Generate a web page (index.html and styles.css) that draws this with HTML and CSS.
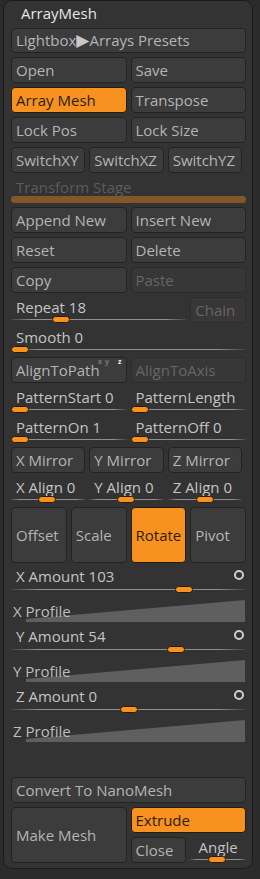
FILE: index.html
```html
<!DOCTYPE html>
<html lang="en">
<head>
  <meta charset="UTF-8">
  <title>ArrayMesh</title>
  <link rel="stylesheet" href="styles.css">
</head>
<body>

  <div class="panel">
    <div class="title">ArrayMesh</div>

    <div class="btn lightbox">Lightbox<span class="arrow">▶</span>Arrays Presets</div>

    <div class="row two">
      <div class="btn">Open</div>
      <div class="btn">Save</div>
    </div>
    <div class="row two">
      <div class="btn on">Array Mesh</div>
      <div class="btn">Transpose</div>
    </div>
    <div class="row two">
      <div class="btn">Lock Pos</div>
      <div class="btn">Lock Size</div>
    </div>
    <div class="row three">
      <div class="btn">SwitchXY</div>
      <div class="btn">SwitchXZ</div>
      <div class="btn">SwitchYZ</div>
    </div>

    <div class="stage">
      <div class="stage-label">Transform Stage</div>
      <div class="stage-bar"></div>
    </div>

    <div class="row two">
      <div class="btn">Append New</div>
      <div class="btn">Insert New</div>
    </div>
    <div class="row two">
      <div class="btn">Reset</div>
      <div class="btn">Delete</div>
    </div>
    <div class="row two">
      <div class="btn">Copy</div>
      <div class="btn off">Paste</div>
    </div>

    <div class="row four">
      <div class="slider span3">
        <div class="slider-label">Repeat 18</div>
        <div class="track"><span class="knob" style="left: 41px"></span></div>
      </div>
      <div class="btn off">Chain</div>
    </div>

    <div class="slider">
      <div class="slider-label">Smooth 0</div>
      <div class="track"><span class="knob" style="left: 0px"></span></div>
    </div>

    <div class="row two">
      <div class="btn">AlignToPath<span class="axes"><b>x</b><b>y</b><b class="z">z</b></span></div>
      <div class="btn off">AlignToAxis</div>
    </div>

    <div class="row two">
      <div class="slider">
        <div class="slider-label">PatternStart 0</div>
        <div class="track"><span class="knob" style="left: 0px"></span></div>
      </div>
      <div class="slider">
        <div class="slider-label">PatternLength</div>
        <div class="track"><span class="knob" style="left: 0px"></span></div>
      </div>
    </div>
    <div class="row two">
      <div class="slider">
        <div class="slider-label">PatternOn 1</div>
        <div class="track"><span class="knob" style="left: 0px"></span></div>
      </div>
      <div class="slider">
        <div class="slider-label">PatternOff 0</div>
        <div class="track"><span class="knob" style="left: 0px"></span></div>
      </div>
    </div>

    <div class="row three">
      <div class="btn">X Mirror</div>
      <div class="btn">Y Mirror</div>
      <div class="btn">Z Mirror</div>
    </div>
    <div class="row three">
      <div class="slider">
        <div class="slider-label">X Align 0</div>
        <div class="track"><span class="knob" style="left: 27px"></span></div>
      </div>
      <div class="slider">
        <div class="slider-label">Y Align 0</div>
        <div class="track"><span class="knob" style="left: 28px"></span></div>
      </div>
      <div class="slider">
        <div class="slider-label">Z Align 0</div>
        <div class="track"><span class="knob" style="left: 28px"></span></div>
      </div>
    </div>

    <div class="row four">
      <div class="btn tall">Offset</div>
      <div class="btn tall">Scale</div>
      <div class="btn tall on">Rotate</div>
      <div class="btn tall">Pivot</div>
    </div>

    <div class="slider">
      <div class="slider-label amount">X Amount 103<span class="ring"></span></div>
      <div class="track"><span class="knob" style="left: 164px"></span></div>
    </div>
    <div class="profile">
      <svg class="ramp" width="219" height="22" viewBox="0 0 219 22"><polygon points="0,22 0,19 219,0 219,22"/></svg>
      <div class="profile-label">X Profile</div>
    </div>

    <div class="slider">
      <div class="slider-label amount">Y Amount 54<span class="ring"></span></div>
      <div class="track"><span class="knob" style="left: 156px"></span></div>
    </div>
    <div class="profile">
      <svg class="ramp" width="219" height="22" viewBox="0 0 219 22"><polygon points="0,22 0,19 219,0 219,22"/></svg>
      <div class="profile-label">Y Profile</div>
    </div>

    <div class="slider">
      <div class="slider-label amount">Z Amount 0<span class="ring"></span></div>
      <div class="track"><span class="knob" style="left: 109px"></span></div>
    </div>
    <div class="profile">
      <svg class="ramp" width="219" height="22" viewBox="0 0 219 22"><polygon points="0,22 0,19 219,0 219,22"/></svg>
      <div class="profile-label">Z Profile</div>
    </div>

    <div class="btn convert">Convert To NanoMesh</div>

    <div class="bottom">
      <div class="btn tall">Make Mesh</div>
      <div class="side">
        <div class="btn on">Extrude</div>
        <div class="row two">
          <div class="btn">Close</div>
          <div class="slider angle">
            <div class="slider-label">Angle</div>
            <div class="track"><span class="knob" style="left: 18px"></span></div>
          </div>
        </div>
      </div>
    </div>
  </div>

</body>
</html>
```

FILE: styles.css
```css
body {
  margin: 0;
  background-color: #2b2b2b;
  font-family: "Open Sans", sans-serif;
  font-size: 15px;
}

.panel {
  box-sizing: border-box;
  width: 250px;
  margin-left: 3px;
  padding: 0 6px 5px 7px;
  background-color: #333333;
  border: 1px solid #1c1c1c;
  border-radius: 9px;
  display: flex;
  flex-direction: column;
  gap: 4px;
}

.title {
  height: 23px;
  line-height: 25px;
  padding-left: 10px;
  color: #e6e6e6;
}

/* buttons */

.btn {
  box-sizing: border-box;
  height: 26px;
  line-height: 24px;
  padding-left: 4px;
  background-color: #3c3c3c;
  border: 1px solid #232323;
  border-radius: 4px;
  color: #b4b4b4;
  white-space: nowrap;
  overflow: hidden;
  position: relative;
}

.btn.on {
  background-color: #f7911f;
  border-color: #2a1a08;
  color: #2e1d08;
}

.btn.off {
  background-color: #373737;
  border-color: #2d2d2d;
  color: #666666;
}

.btn.tall {
  height: 56px;
  line-height: 54px;
}

.lightbox {
  height: 25px;
  line-height: 23px;
}

.arrow {
  font-family: "DejaVu Sans", sans-serif;
  font-size: 17px;
  line-height: 0;
  color: #c8c8c8;
}

.axes {
  position: absolute;
  top: 0;
  right: 4px;
  display: flex;
  gap: 3px;
  font-size: 7px;
  line-height: 8px;
  color: #777777;
}

.axes .z {
  color: #eeeeee;
  margin-left: 6px;
}

.row {
  display: grid;
  gap: 4px;
}

.row.two {
  grid-template-columns: 1fr 1fr;
}

.row.three {
  width: 231px;
  grid-template-columns: 1fr 1fr 1fr;
}

.row.four {
  grid-template-columns: 1fr 1fr 1fr 1fr;
}

.span3 {
  grid-column: span 3;
}

/* transform stage */

.stage {
  height: 26px;
}

.stage-label {
  height: 19px;
  line-height: 21px;
  padding-left: 5px;
  color: #5c5c5c;
}

.stage-bar {
  height: 7px;
  border-radius: 4px;
  background-color: #84572a;
}

/* sliders */

.slider {
  height: 26px;
}

.slider-label {
  height: 18px;
  line-height: 20px;
  padding-left: 5px;
  color: #c4c4c4;
  white-space: nowrap;
}

.slider-label.amount {
  display: flex;
  justify-content: space-between;
  align-items: center;
}

.ring {
  box-sizing: border-box;
  width: 10px;
  height: 10px;
  margin-right: 2px;
  margin-top: -3px;
  border: 2px solid #cfcfcf;
  border-radius: 50%;
}

.track {
  position: relative;
  height: 8px;
}

.track::before {
  content: "";
  position: absolute;
  left: 0;
  right: 0;
  top: 4px;
  height: 1px;
  background: linear-gradient(to right, rgba(140, 140, 140, 0.15), #8f8f8f 12%, #8f8f8f 88%, rgba(140, 140, 140, 0.15));
}

.knob {
  position: absolute;
  top: 1px;
  box-sizing: border-box;
  width: 18px;
  height: 7px;
  background-color: #f7911f;
  border: 1px solid #2a1a08;
  border-radius: 4px;
}

.angle .slider-label {
  padding-left: 0;
  text-align: center;
}

/* profiles */

.profile {
  display: grid;
  height: 23px;
  margin-top: 3px;
}

.profile > * {
  grid-area: 1 / 1;
}

.ramp {
  margin-left: 15px;
  fill: #5f5f5f;
}

.profile-label {
  line-height: 22px;
  padding-left: 2px;
  color: #bdbdbd;
}

/* bottom block */

.convert {
  margin-top: 30px;
}

.bottom {
  display: grid;
  grid-template-columns: 1fr 1fr;
  gap: 4px;
  height: 56px;
}

.side {
  display: flex;
  flex-direction: column;
  gap: 4px;
}
```
